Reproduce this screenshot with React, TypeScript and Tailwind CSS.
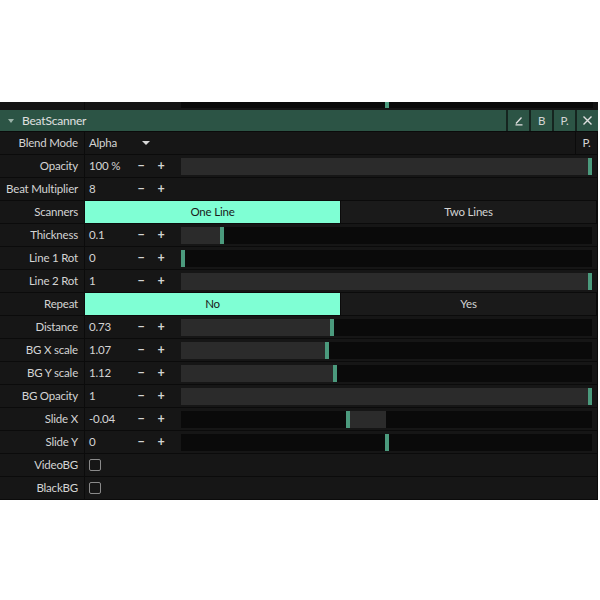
import React from "react";

type SliderRow = {
  kind: "slider";
  label: string;
  value: string;
  // fill from..to in fractions of the track, handle position
  from: number;
  to: number;
  handle: number;
};
type ToggleRow = { kind: "toggle"; label: string; options: [string, string]; active: number };
type CheckRow = { kind: "check"; label: string };
type PlainRow = { kind: "plain"; label: string; value: string };
type Row = SliderRow | ToggleRow | CheckRow | PlainRow | { kind: "blend"; label: string };

const rows: Row[] = [
  { kind: "blend", label: "Blend Mode" },
  { kind: "slider", label: "Opacity", value: "100 %", from: 0, to: 1, handle: 1 },
  { kind: "plain", label: "Beat Multiplier", value: "8" },
  { kind: "toggle", label: "Scanners", options: ["One Line", "Two Lines"], active: 0 },
  { kind: "slider", label: "Thickness", value: "0.1", from: 0, to: 0.095, handle: 0.095 },
  { kind: "slider", label: "Line 1 Rot", value: "0", from: 0, to: 0, handle: 0 },
  { kind: "slider", label: "Line 2 Rot", value: "1", from: 0, to: 1, handle: 1 },
  { kind: "toggle", label: "Repeat", options: ["No", "Yes"], active: 0 },
  { kind: "slider", label: "Distance", value: "0.73", from: 0, to: 0.365, handle: 0.365 },
  { kind: "slider", label: "BG X scale", value: "1.07", from: 0, to: 0.355, handle: 0.355 },
  { kind: "slider", label: "BG Y scale", value: "1.12", from: 0, to: 0.373, handle: 0.373 },
  { kind: "slider", label: "BG Opacity", value: "1", from: 0, to: 1, handle: 1 },
  { kind: "slider", label: "Slide X", value: "-0.04", from: 0.405, to: 0.5, handle: 0.405 },
  { kind: "slider", label: "Slide Y", value: "0", from: 0.5, to: 0.5, handle: 0.5 },
  { kind: "check", label: "VideoBG" },
  { kind: "check", label: "BlackBG" },
];

const Track = ({ from, to, handle }: { from: number; to: number; handle: number }) => (
  <div className="relative flex-1 h-[17px] bg-[#0a0a0a] ml-[10px] mr-[5px]">
    <div
      className="absolute top-0 bottom-0 bg-[#2b2b2b]"
      style={{ left: `${from * 100}%`, width: `${(to - from) * 100}%` }}
    />
    <div
      className="absolute top-0 bottom-0 w-[4px] bg-[#4b9a7d]"
      style={{ left: `calc(${handle * 100}% - ${handle * 4}px)` }}
    />
  </div>
);

const Stepper = () => (
  <>
    <span className="w-[20px] text-center text-[12.5px] font-bold">−</span>
    <span className="w-[20px] text-center text-[12.5px] font-bold">+</span>
  </>
);

const Cell = ({ row }: { row: Row }) => {
  if (row.kind === "toggle") {
    return (
      <div className="flex h-full">
        {row.options.map((o, i) => (
          <div
            key={o}
            className={
              i === row.active
                ? "flex-1 flex items-center justify-center bg-[#7fffd4] text-[#1a1a1a]"
                : "flex-1 flex items-center justify-center bg-[#1a1a1a] border-l border-r border-[#0b0b0b]"
            }
          >
            {o}
          </div>
        ))}
      </div>
    );
  }
  if (row.kind === "check") {
    return (
      <div className="flex items-center h-full pl-[4px]">
        <div className="w-[12px] h-[12px] border border-[#8a8a8a] rounded-[2px]" />
      </div>
    );
  }
  if (row.kind === "blend") {
    return (
      <div className="flex items-center h-full pl-[4px]">
        <span className="w-[42px]">Alpha</span>
        <svg width="30" height="10" viewBox="0 0 30 10">
          <path d="M11 3h8l-4 4z" fill="#d8d8d8" />
        </svg>
        <div className="flex-1" />
        <div className="w-[22px] h-full flex items-center justify-center border-l border-[#0b0b0b]">P.</div>
      </div>
    );
  }
  if (row.kind === "plain") {
    return (
      <div className="flex items-center h-full pl-[4px]">
        <span className="w-[42px]">{row.value}</span>
        <Stepper />
      </div>
    );
  }
  return (
    <div className="flex items-center h-full pl-[4px]">
      <span className="w-[42px]">{row.value}</span>
      <Stepper />
      <Track from={row.from} to={row.to} handle={row.handle} />
    </div>
  );
};

const HeaderButton = ({ children }: { children: React.ReactNode }) => (
  <div className="w-[23px] h-full flex items-center justify-center border-l-2 border-[#15241f]">{children}</div>
);

export default function App() {
  return (
    <div
      className="w-[600px] h-[600px] bg-white pt-[102px] text-[11.5px] tracking-[-0.2px] text-[#d4d4d4]"
      style={{ fontFamily: 'Lato, "Noto Sans", sans-serif' }}
    >
      <div className="w-[598px] bg-[#161616]">
        {/* tail of the previous block */}
        <div className="h-[8px] grid grid-cols-[85px_1fr] bg-[#141414]">
          <div className="border-r border-[#0b0b0b]" />
          <div className="flex pl-[96px] pr-[5px]">
            <div className="relative flex-1 h-[6px] bg-[#0a0a0a]">
              <div className="absolute left-[204px] top-0 w-[4px] h-full bg-[#4b9a7d]" />
            </div>
          </div>
        </div>

        {/* header */}
        <div className="h-[22px] flex items-center bg-[#2c5445] border-b border-[#0b0b0b]">
          <svg width="22" height="10" viewBox="0 0 22 10">
            <path d="M8 3h6l-3 4z" fill="#9bb3a9" />
          </svg>
          <span className="text-[12px] text-[#e0e0e0]">BeatScanner</span>
          <div className="flex-1" />
          <div className="flex h-full">
            <HeaderButton>
              <svg width="10" height="10" viewBox="0 0 10 10">
                <path d="M7.5 1.5L2 7.5M1.5 8.8h7" stroke="#e0e0e0" strokeWidth="1.3" fill="none" />
              </svg>
            </HeaderButton>
            <HeaderButton>B</HeaderButton>
            <HeaderButton>P.</HeaderButton>
            <HeaderButton>
              <svg width="11" height="11" viewBox="0 0 11 11">
                <path d="M1.5 1.5l8 8M9.5 1.5l-8 8" stroke="#e0e0e0" strokeWidth="1.4" />
              </svg>
            </HeaderButton>
          </div>
        </div>

        {rows.map((row) => (
          <div
            key={row.label}
            className="h-[23px] grid grid-cols-[85px_1fr] border-b border-[#0b0b0b] border-r"
          >
            <div className="flex items-center justify-end pr-[6px] border-r border-[#0b0b0b] whitespace-nowrap">
              {row.label}
            </div>
            <Cell row={row} />
          </div>
        ))}
      </div>
    </div>
  );
}
